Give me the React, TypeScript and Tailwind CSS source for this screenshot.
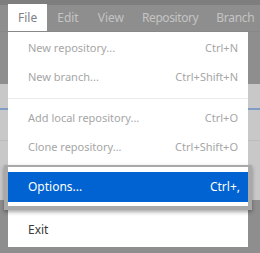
import React from "react";

const items1 = [
  { label: "New repository...", sc: "Ctrl+N" },
  { label: "New branch...", sc: "Ctrl+Shift+N" },
];
const items2 = [
  { label: "Add local repository...", sc: "Ctrl+O" },
  { label: "Clone repository...", sc: "Ctrl+Shift+O" },
];

function Row({ label, sc }: { label: string; sc: string }) {
  return (
    <div className="flex h-[29px] items-center justify-between pl-[20px] pr-[10px] text-[#a6a6a6]">
      <span>{label}</span>
      <span>{sc}</span>
    </div>
  );
}

function Sep() {
  return (
    <div className="flex h-[12px] items-center">
      <div className="h-px w-full bg-[#ececec]" />
    </div>
  );
}

export default function App() {
  return (
    <div
      className="relative h-[253px] w-[260px] overflow-hidden bg-[#8e8e8e] text-[11px]"
      style={{ fontFamily: '"Noto Sans", "Open Sans", sans-serif' }}
    >
      <div className="h-[5px] bg-[#7e7e7e]" />
      <div className="flex h-[27px] items-end border-b border-[#888888] text-[12px] text-[#c4c4c4]">
        <div className="ml-[8px] flex h-[27px] items-center bg-white px-[10px] text-[#7d8088]">File</div>
        <div className="flex h-[27px] items-center px-[10px]">Edit</div>
        <div className="flex h-[27px] items-center px-[9px]">View</div>
        <div className="flex h-[27px] items-center px-[9px] tracking-[-0.4px]">Repository</div>
        <div className="flex h-[27px] items-center px-[9px] tracking-[-0.3px]">Branch</div>
      </div>
      <div className="h-[52px]" />
      <div className="flex h-[116px] flex-col bg-[#c8c8c8]">
        <div className="h-[24px]" />
        <div className="h-[2px] bg-[#7f9cc6]" />
        <div className="h-[30px]" />
        <div className="h-px bg-[#bdbdbd]" />
      </div>

      <div className="absolute left-[8px] top-[32px] h-[215px] w-[240px] bg-white pt-[2px]">
        {items1.map((i) => (
          <Row key={i.label} {...i} />
        ))}
        <Sep />
        {items2.map((i) => (
          <Row key={i.label} {...i} />
        ))}
        <Sep />
        <div className="h-[29px]" />
        <Sep />
        <div className="flex h-[29px] items-center pl-[20px] text-[12px] text-[#3a3a3a]">Exit</div>
      </div>

      <div className="absolute left-[4px] top-[165px] h-[45px] w-[248px] bg-[#a9a9a9] p-[4px] pt-[2px] shadow-[0_2px_4px_rgba(0,0,0,0.35)]">
        <div className="h-full w-full bg-white pt-[5px]">
          <div className="flex h-[30px] items-center justify-between bg-[#0063d1] pl-[20px] pr-[8px] text-[12px] text-white">
            <span>Options...</span>
            <span>Ctrl+,</span>
          </div>
        </div>
      </div>
    </div>
  );
}
